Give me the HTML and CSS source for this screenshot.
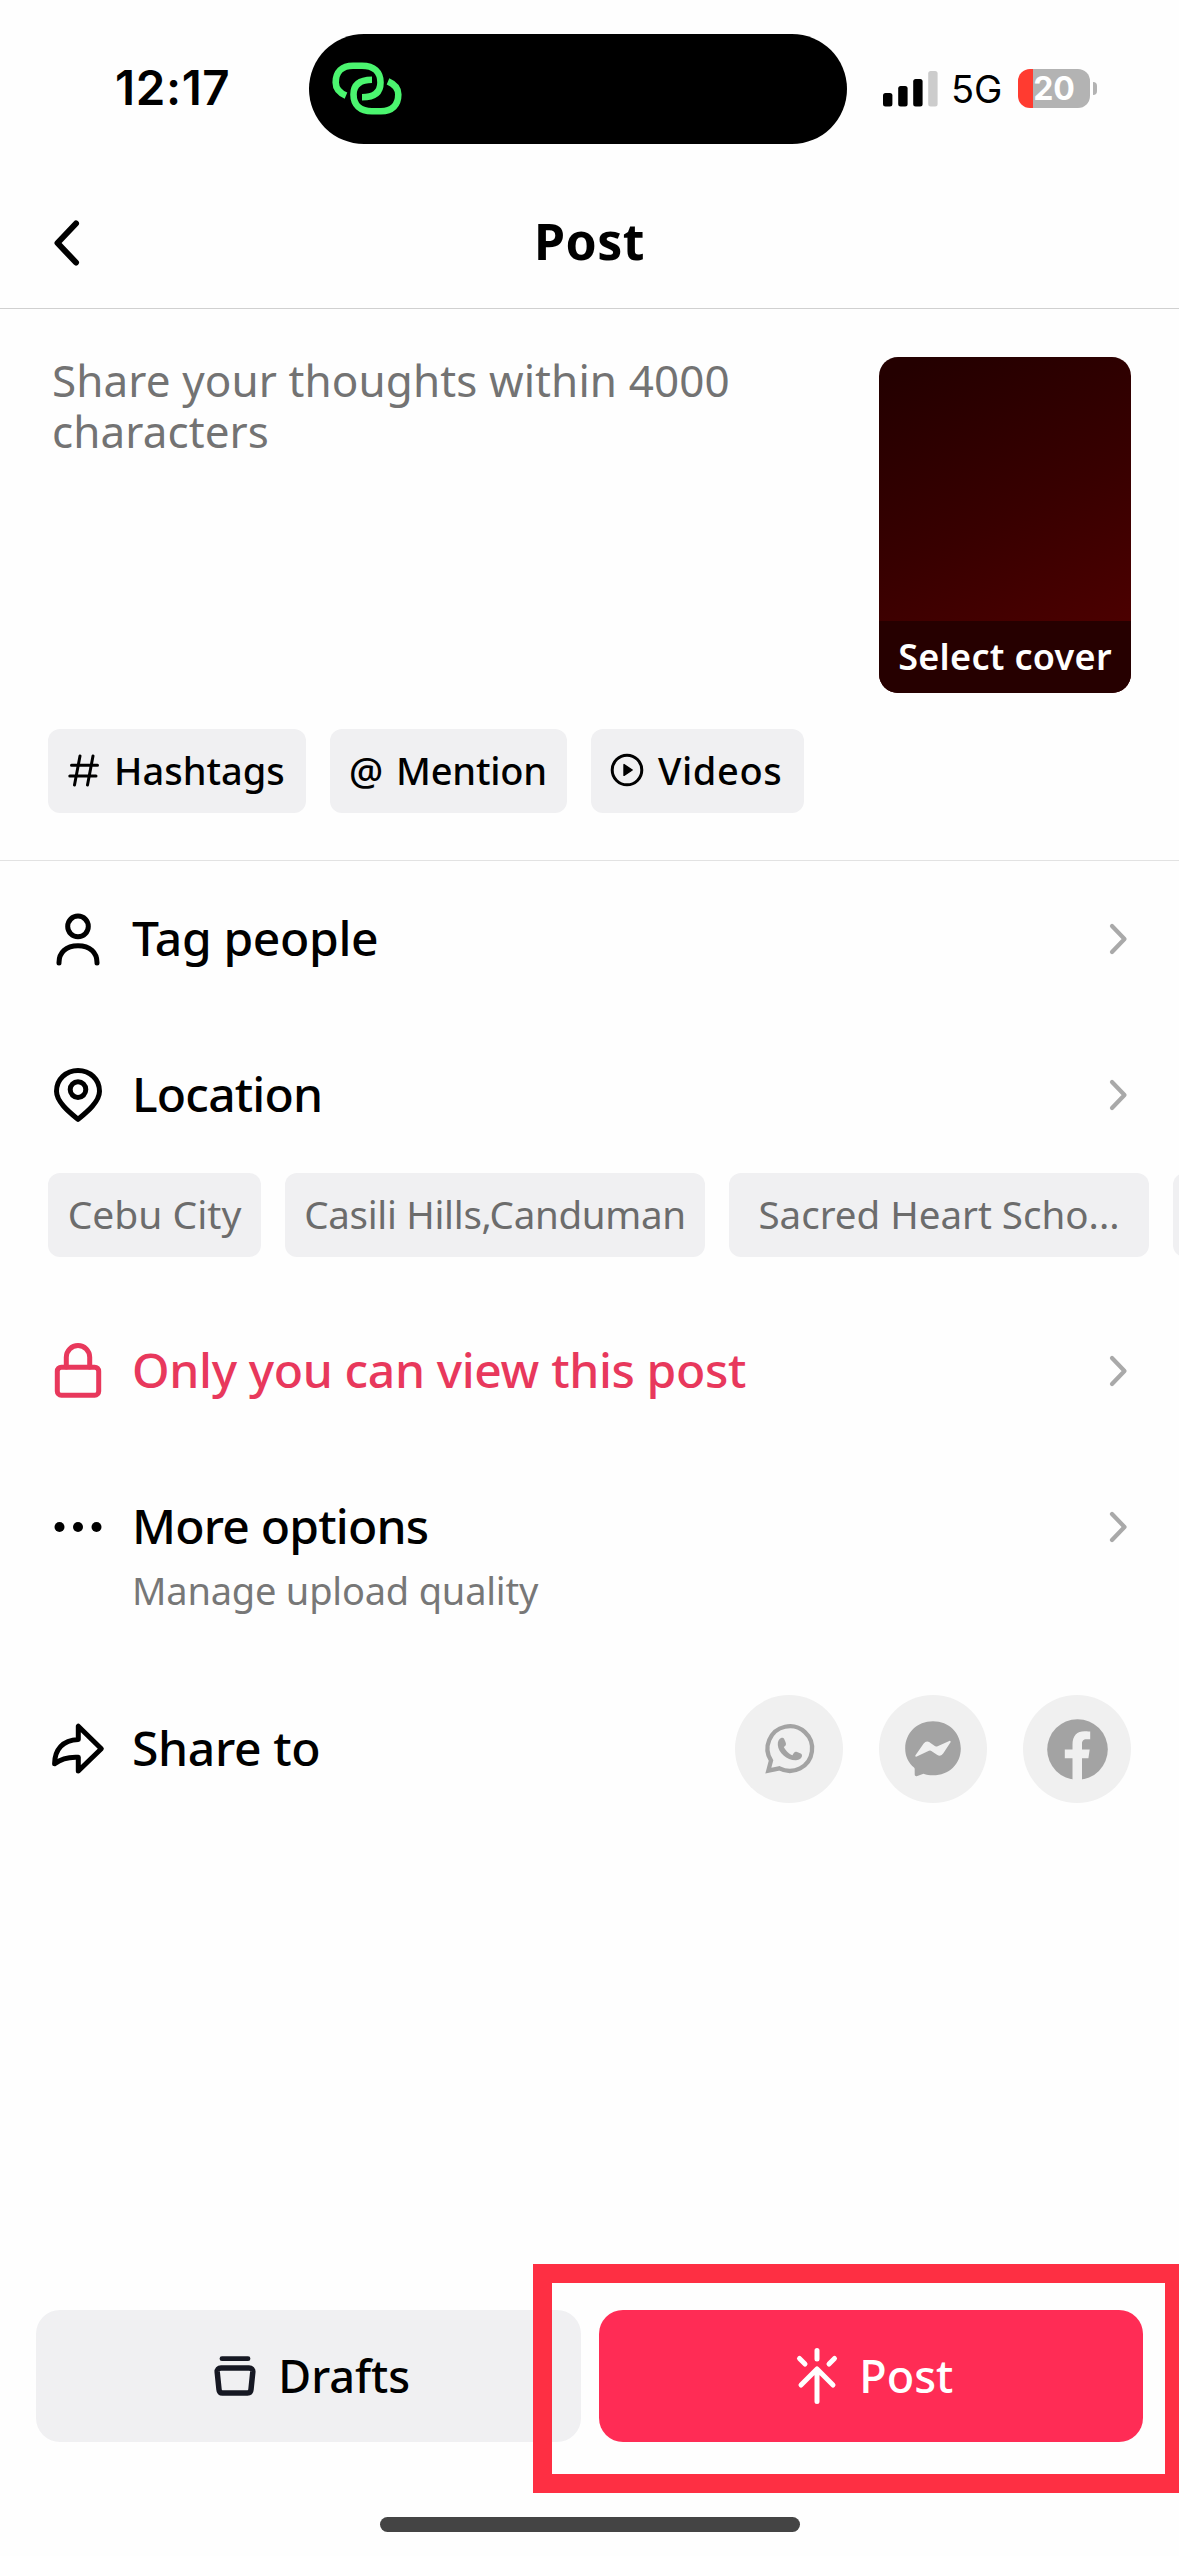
FILE: index.html
```html
<!DOCTYPE html>
<html lang="en">
<head>
<meta charset="utf-8">
<title>Post</title>
<link rel="stylesheet" href="styles.css">
</head>
<body>
<div class="screen">
  <div class="status">
    <div class="status-time">12:17</div>
    <div class="island">
      <svg class="island-icon" width="76" height="61" viewBox="0 0 76 61" fill="none" stroke="#4bf56f" stroke-width="6.6">
        <path d="M17 37.6C10.5 34.8 6.7 30.5 6.7 24.5C6.7 14 13 7.8 24 7.8H33C45 7.8 51.5 14 51.5 24.5C51.5 34 46 39.3 33 39.3"/>
        <path d="M59 23.4C65.5 26.2 69.3 30.5 69.3 36.5C69.3 47 63 53.2 52 53.2H43C31 53.2 24.5 47 24.5 36.5C24.5 27 30 21.7 43 21.7"/>
      </svg>
    </div>
    <div class="status-right">
      <svg width="55" height="36" viewBox="0 0 55 36">
        <rect x="0" y="22" width="9.4" height="13.5" rx="2.5"/>
        <rect x="15.2" y="15" width="9.4" height="20.5" rx="2.5"/>
        <rect x="30.2" y="8" width="9.4" height="27.5" rx="2.5"/>
        <rect x="45.2" y="0" width="9.4" height="35.5" rx="2.5" fill="#cccccc"/>
      </svg>
      <span class="network">5G</span>
      <span class="battery"><span class="battery-level">20</span></span>
      <span class="battery-cap"></span>
    </div>
  </div>

  <header class="header">
    <svg class="back" width="28" height="48" viewBox="0 0 28 48" fill="none" stroke="#000" stroke-width="6" stroke-linecap="round" stroke-linejoin="round"><path d="M23 4.5L4.5 24L23 43.5"/></svg>
    <h1 class="title">Post</h1>
  </header>

  <section class="composer">
    <div class="composer-top">
      <p class="placeholder">Share your thoughts within 4000 characters</p>
      <div class="cover"><div class="cover-label">Select cover</div></div>
    </div>
    <div class="tools">
      <div class="tool tool-hashtags">
        <svg class="tool-icon" width="36" height="36" viewBox="0 0 36 36" fill="none" stroke="#000" stroke-width="3" stroke-linecap="round"><path d="M14 4L8.500 33M27 4L21.500 33M5.500 13.300H31.500M3.800 24H30"/></svg>
        <span>Hashtags</span>
      </div>
      <div class="tool tool-mention"><span class="tool-icon glyph-at">@</span><span>Mention</span></div>
      <div class="tool tool-videos">
        <svg class="tool-icon" width="36" height="36" viewBox="0 0 36 36"><circle cx="18" cy="18" r="14.8" fill="none" stroke="#000" stroke-width="3"/><path d="M15 12.6V23.4L23.2 18Z" stroke="#000" stroke-width="1.4" stroke-linejoin="round"/></svg>
        <span>Videos</span>
      </div>
    </div>
  </section>

  <main class="options">
    <div class="option">
      <svg class="option-icon" viewBox="0 0 60 60"><circle cx="30" cy="17.4" r="10.3"/><path d="M11 54V53.500C11 43.500 18 36.700 30 36.700S49 43.500 49 53.500V54"/></svg>
      <span class="label">Tag people</span>
      <svg class="chevron" viewBox="0 0 20 32"><path d="M3 3L15.500 16L3 29"/></svg>
    </div>
    <div class="option">
      <svg class="option-icon" viewBox="0 0 60 60"><path d="M30 54.300C23 48.500 8.500 37.500 8.500 26.300C8.500 14.300 18 5.500 30 5.500S51.500 14.300 51.500 26.300C51.500 37.500 37 48.500 30 54.300Z"/><circle cx="30" cy="24.600" r="7.800"/></svg>
      <span class="label label-tight">Location</span>
      <svg class="chevron" viewBox="0 0 20 32"><path d="M3 3L15.500 16L3 29"/></svg>
    </div>
    <div class="places">
      <span class="place place-city">Cebu City</span>
      <span class="place place-long">Casili Hills,Canduman</span>
      <span class="place">Sacred Heart Scho...</span>
      <span class="place"></span>
    </div>
    <div class="option option-private">
      <svg class="option-icon" viewBox="0 0 60 60"><rect x="9.300" y="26.200" width="41.400" height="28" rx="4"/><path d="M18.300 26V16.200a11.700 11.700 0 0 1 23.400 0V26"/></svg>
      <span class="label">Only you can view this post</span>
      <svg class="chevron" viewBox="0 0 20 32"><path d="M3 3L15.500 16L3 29"/></svg>
    </div>
    <div class="option option-more">
      <svg class="option-icon option-dots" viewBox="0 0 60 60"><circle cx="11.500" cy="30" r="5"/><circle cx="30" cy="30" r="5"/><circle cx="48.500" cy="30" r="5"/></svg>
      <span class="label label-tight">More options</span>
      <svg class="chevron" viewBox="0 0 20 32"><path d="M3 3L15.500 16L3 29"/></svg>
    </div>
    <p class="hint">Manage upload quality</p>
    <div class="option option-share">
      <svg class="option-icon" viewBox="0 0 60 60"><path d="M30.300 7.200V20.500C14.500 21 6.600 31 6.600 44.800C14 39 21 37.800 30.300 38.300V52L53.300 29.700Z"/></svg>
      <span class="label">Share to</span>
      <div class="targets">
        <span class="target"><svg width="60" height="60" viewBox="0 0 60 60"><path d="M9.300 51.700L12 41.500A22.300 22.300 0 1 1 20.500 49.300Z" fill="none" stroke="#a3a3a3" stroke-width="4.300"/><path fill="#a3a3a3" d="M22 19C20 20 18.500 22.500 18.800 26C19.500 34 28 41.500 37 41.300C40.500 41 43 39 43 36.500C43 35 42 34.300 38 33C35.500 32.200 35 34 33.500 36.200C30 35 26.500 31.500 24.800 28C27 26.500 27.500 25.500 26.500 23C25 19 24.500 18 22 19Z"/></svg></span>
        <span class="target"><svg width="60" height="60" viewBox="0 0 60 60"><path fill="#a3a3a3" d="M30 2.300C14 2.300 2.200 14 2.200 29.500C2.200 37.500 5.500 44 11 48.500C11.500 49 11.700 49.500 11.700 50.200V55.500C11.700 57 13 57.500 14.300 57L20.500 54.800C23.500 55.800 26.500 56.300 30 56.300C46 56.300 57.800 45 57.800 29.500S46 2.300 30 2.300Z"/><path fill="#f0f0f0" stroke="#f0f0f0" stroke-width="2" stroke-linejoin="round" d="M13.300 36.700L21.500 25Q23.500 22.500 26.200 24.200L32 28.200Q33.500 29 35 28.200L46.700 22.800L39.500 33.800Q37.500 36.800 34.500 34.800L28.500 31Q27 30 25.500 30.900Z"/></svg></span>
        <span class="target"><svg width="61" height="61" viewBox="0 0 61 61"><circle cx="30.500" cy="30.500" r="30.300" fill="#a3a3a3"/><path fill="#f0f0f0" d="M25.500 61V39.200H17.800V30.500H25.500V25.500C25.500 16.500 30 12.200 37.700 12.200C40.200 12.200 43.200 12.600 43.200 12.600V20.200H39.500C36.200 20.200 35 22.200 35 25V30.500H42.700L41.400 39.200H35V61Z"/></svg></span>
      </div>
    </div>
  </main>

  <footer class="footer">
    <div class="button button-drafts">
      <svg width="48" height="48" viewBox="0 0 48 48" fill="none" stroke="#161823" stroke-width="5.500" stroke-linejoin="round"><path d="M11 6.700H37" stroke-width="4.800" stroke-linecap="round"/><path d="M10 16H38C40.500 16 42 17.500 41.800 20L40 37.500C39.800 39.800 38.500 41 36.500 41H11.500C9.500 41 8.200 39.800 8 37.500L6.200 20C6 17.500 7.500 16 10 16Z"/></svg>
      <span>Drafts</span>
    </div>
    <div class="button button-post">
      <svg width="48" height="60" viewBox="0 0 48 60" fill="none" stroke="#fff" stroke-width="5" stroke-linecap="round" stroke-linejoin="round"><path d="M24 4.500V13M6.500 12.500L12 18M41.500 12.500L36 18M24 55.500V24M8 39L24 23L40 39"/></svg>
      <span>Post</span>
    </div>
  </footer>
  <div class="home-bar"></div>
  <div class="callout"></div>
</div>
</body>
</html>
```
FILE: styles.css
```css
* {
  box-sizing: border-box;
}

body {
  margin: 0;
  background: #fff;
  color: #000;
  font-family: "Noto Sans", "Open Sans", sans-serif;
}

svg {
  display: block;
  flex: none;
}

.screen {
  position: relative;
  display: flex;
  flex-direction: column;
  width: 1179px;
  height: 2556px;
  overflow: hidden;
  background: #fefefe;
}

/* Status bar */
.status {
  display: grid;
  grid-template-columns: 309px 538px 1fr;
  align-items: center;
  height: 177px;
  font-family: Inter, sans-serif;
}

.status-time {
  padding: 0 0 1px 115px;
  font-size: 47.5px;
  font-weight: 600;
  letter-spacing: 0.6px;
  line-height: 56px;
}

.island {
  display: flex;
  align-items: center;
  height: 110px;
  padding-left: 20px;
  border-radius: 55px;
  background: #000;
}

.status-right {
  display: flex;
  align-items: center;
  padding-left: 36px;
}

.network {
  width: 80px;
  padding-left: 13px;
  font-size: 38px;
  line-height: 46px;
}

.battery {
  display: flex;
  align-items: center;
  justify-content: center;
  width: 72px;
  height: 39px;
  border-radius: 12px;
  background: linear-gradient(90deg, #ff3b30 15px, #b3b3b3 15px);
}

.battery-level {
  color: #fff;
  font-size: 32px;
  font-weight: 700;
  line-height: 37px;
}

.battery-cap {
  width: 4px;
  height: 13px;
  margin-left: 3px;
  border-radius: 0 6px 6px 0;
  background: #b3b3b3;
}

/* Title bar */
.header {
  display: grid;
  grid-template-columns: 1fr auto 1fr;
  align-items: center;
  height: 132px;
  padding: 0 53px;
  border-bottom: 1px solid #d0d0d0;
}

.title {
  margin: 0;
  padding-bottom: 4px;
  font-size: 50px;
  font-weight: 700;
  letter-spacing: 0.5px;
  line-height: 60px;
}

/* Composer */
.composer {
  height: 552px;
  padding: 48px 48px 0;
  border-bottom: 1px solid #e2e2e2;
}

.composer-top {
  display: flex;
  justify-content: space-between;
  height: 336px;
}

.placeholder {
  width: 720px;
  margin: -2px 0 0 4px;
  color: #737373;
  font-size: 44px;
  letter-spacing: 0.1px;
  line-height: 51.3px;
}

.cover {
  display: flex;
  flex-direction: column;
  justify-content: flex-end;
  width: 252px;
  height: 336px;
  border-radius: 19px;
  overflow: hidden;
  background: linear-gradient(155deg, #240000 5%, #380000 48%, #4c0000 85%);
}

.cover-label {
  height: 72px;
  background: #260000;
  color: #fff;
  font-size: 36px;
  font-weight: 600;
  letter-spacing: 0.3px;
  line-height: 72px;
  text-align: center;
}

.tools {
  display: flex;
  gap: 24px;
  margin-top: 36px;
}

.tool {
  display: flex;
  align-items: center;
  gap: 12px;
  height: 84px;
  padding: 0 0 2px 18px;
  border-radius: 12px;
  background: #f0f0f2;
  font-size: 38px;
  font-weight: 540;
  line-height: 50px;
}

.tool-hashtags { width: 258px; }
.tool-mention { width: 237px; letter-spacing: -0.2px; }
.tool-videos { width: 213px; gap: 13px; letter-spacing: 0.6px; }

.tool-icon {
  width: 36px;
  text-align: center;
}

.glyph-at {
  display: flex;
  justify-content: center;
  font-size: 38px;
  font-weight: 500;
}

/* Option rows */
.option {
  display: flex;
  align-items: center;
  height: 156px;
  padding: 0 48px;
}

.option-icon {
  width: 60px;
  height: 60px;
  fill: none;
  stroke: currentColor;
  stroke-width: 5;
  stroke-linecap: round;
  stroke-linejoin: round;
}

.option-dots {
  fill: currentColor;
  stroke: none;
}

.label {
  flex: 1;
  padding: 0 0 3px 24px;
  font-size: 48px;
  font-weight: 540;
  letter-spacing: -0.35px;
  line-height: 60px;
}

.label-tight { letter-spacing: -0.8px; }

.chevron {
  width: 20px;
  height: 32px;
  margin-right: 2px;
  fill: none;
  stroke: #a9a9a9;
  stroke-width: 4.2;
  stroke-linecap: round;
  stroke-linejoin: round;
}

.places {
  display: flex;
  gap: 24px;
  margin-bottom: 36px;
  padding-left: 48px;
  overflow: hidden;
}

.place {
  flex: none;
  width: 420px;
  height: 84px;
  border-radius: 12px;
  background: #f0f0f2;
  color: #6c6c6c;
  font-size: 38.5px;
  line-height: 82px;
  text-align: center;
}

.place-city {
  width: 213px;
  font-size: 39px;
}

.place-long { letter-spacing: -0.3px; }

.option-private { color: #e8385c; }

.option-more {
  height: 60px;
  margin-top: 48px;
}

.hint {
  margin: 8px 0 80px 132px;
  color: #777;
  font-size: 38px;
  letter-spacing: -0.2px;
  line-height: 50px;
}

.option-share { height: 108px; }

.targets {
  display: flex;
  gap: 36px;
}

.target {
  display: flex;
  align-items: center;
  justify-content: center;
  width: 108px;
  height: 108px;
  border-radius: 50%;
  background: #f0f0f0;
}

/* Bottom actions */
.footer {
  display: flex;
  gap: 18px;
  margin-top: auto;
  padding: 0 36px 75px;
}

.button {
  display: flex;
  flex: 1;
  align-items: center;
  justify-content: center;
  height: 132px;
  border-radius: 24px;
  font-size: 45px;
  font-weight: 540;
  line-height: 60px;
}

.button span { padding-bottom: 1px; }

.button-drafts {
  gap: 19px;
  padding-left: 5px;
  background: #f0f0f2;
}

.button-post {
  gap: 18px;
  padding-left: 5px;
  background: #ff2c55;
  color: #fff;
}

.home-bar {
  align-self: center;
  width: 420px;
  height: 15px;
  margin-bottom: 24px;
  border-radius: 8px;
  background: #444;
}

/* Marker frame laid over the publish button */
.callout {
  position: absolute;
  top: 2264px;
  right: 0;
  width: 646px;
  height: 229px;
  border: 19px solid #fe2f43;
  border-right-width: 14px;
}
```
